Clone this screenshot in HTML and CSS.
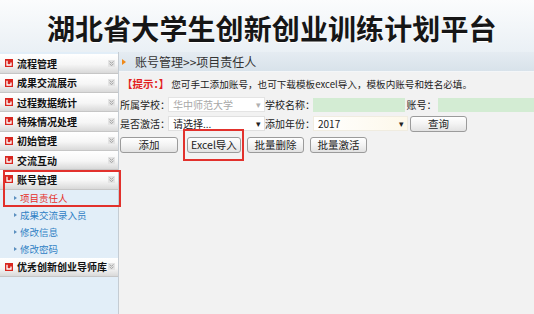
FILE: index.html
```html
<!DOCTYPE html>
<html lang="zh">
<head>
<meta charset="utf-8">
<title>湖北省大学生创新创业训练计划平台</title>
<link rel="stylesheet" href="styles.css">
</head>
<body>
<div class="page">
  <header class="top">
    <h1 class="title">湖北省大学生创新创业训练计划平台</h1>
  </header>
  <div class="main">
    <aside class="side">
      <div class="grp"><svg class="ico" viewBox="0 0 8 8"><rect width="8" height="8" fill="#d8261f"/><path d="M2 1.8V6H6V3.6" fill="none" stroke="#fff" stroke-width="1.3"/></svg><span class="gt">流程管理</span><svg class="chev" viewBox="0 0 7 7"><rect width="7" height="7" fill="#e4e4e4"/><path d="M1.5 1.5L3.5 3.2 5.5 1.5M1.5 3.8L3.5 5.5 5.5 3.8" fill="none" stroke="#9a9a9a" stroke-width="0.9"/></svg></div>
      <div class="grp"><svg class="ico" viewBox="0 0 8 8"><rect width="8" height="8" fill="#d8261f"/><path d="M2 1.8V6H6V3.6" fill="none" stroke="#fff" stroke-width="1.3"/></svg><span class="gt">成果交流展示</span><svg class="chev" viewBox="0 0 7 7"><rect width="7" height="7" fill="#e4e4e4"/><path d="M1.5 1.5L3.5 3.2 5.5 1.5M1.5 3.8L3.5 5.5 5.5 3.8" fill="none" stroke="#9a9a9a" stroke-width="0.9"/></svg></div>
      <div class="grp"><svg class="ico" viewBox="0 0 8 8"><rect width="8" height="8" fill="#d8261f"/><path d="M2 1.8V6H6V3.6" fill="none" stroke="#fff" stroke-width="1.3"/></svg><span class="gt">过程数据统计</span><svg class="chev" viewBox="0 0 7 7"><rect width="7" height="7" fill="#e4e4e4"/><path d="M1.5 1.5L3.5 3.2 5.5 1.5M1.5 3.8L3.5 5.5 5.5 3.8" fill="none" stroke="#9a9a9a" stroke-width="0.9"/></svg></div>
      <div class="grp"><svg class="ico" viewBox="0 0 8 8"><rect width="8" height="8" fill="#d8261f"/><path d="M2 1.8V6H6V3.6" fill="none" stroke="#fff" stroke-width="1.3"/></svg><span class="gt">特殊情况处理</span><svg class="chev" viewBox="0 0 7 7"><rect width="7" height="7" fill="#e4e4e4"/><path d="M1.5 1.5L3.5 3.2 5.5 1.5M1.5 3.8L3.5 5.5 5.5 3.8" fill="none" stroke="#9a9a9a" stroke-width="0.9"/></svg></div>
      <div class="grp"><svg class="ico" viewBox="0 0 8 8"><rect width="8" height="8" fill="#d8261f"/><path d="M2 1.8V6H6V3.6" fill="none" stroke="#fff" stroke-width="1.3"/></svg><span class="gt">初始管理</span><svg class="chev" viewBox="0 0 7 7"><rect width="7" height="7" fill="#e4e4e4"/><path d="M1.5 1.5L3.5 3.2 5.5 1.5M1.5 3.8L3.5 5.5 5.5 3.8" fill="none" stroke="#9a9a9a" stroke-width="0.9"/></svg></div>
      <div class="grp"><svg class="ico" viewBox="0 0 8 8"><rect width="8" height="8" fill="#d8261f"/><path d="M2 1.8V6H6V3.6" fill="none" stroke="#fff" stroke-width="1.3"/></svg><span class="gt">交流互动</span><svg class="chev" viewBox="0 0 7 7"><rect width="7" height="7" fill="#e4e4e4"/><path d="M1.5 1.5L3.5 3.2 5.5 1.5M1.5 3.8L3.5 5.5 5.5 3.8" fill="none" stroke="#9a9a9a" stroke-width="0.9"/></svg></div>
      <div class="mark">
        <div class="grp"><svg class="ico" viewBox="0 0 8 8"><rect width="8" height="8" fill="#d8261f"/><path d="M2 1.8V6H6V3.6" fill="none" stroke="#fff" stroke-width="1.3"/></svg><span class="gt">账号管理</span><svg class="chev" viewBox="0 0 7 7"><rect width="7" height="7" fill="#e4e4e4"/><path d="M1.5 1.5L3.5 3.2 5.5 1.5M1.5 3.8L3.5 5.5 5.5 3.8" fill="none" stroke="#9a9a9a" stroke-width="0.9"/></svg></div>
        <div class="sub active"><span class="dot"></span>项目责任人</div>
      </div>
      <div class="sub"><span class="dot"></span>成果交流录入员</div>
      <div class="sub"><span class="dot"></span>修改信息</div>
      <div class="sub"><span class="dot"></span>修改密码</div>
      <div class="grp"><svg class="ico" viewBox="0 0 8 8"><rect width="8" height="8" fill="#d8261f"/><path d="M2 1.8V6H6V3.6" fill="none" stroke="#fff" stroke-width="1.3"/></svg><span class="gt">优秀创新创业导师库</span><svg class="chev" viewBox="0 0 7 7"><rect width="7" height="7" fill="#e4e4e4"/><path d="M1.5 1.5L3.5 3.2 5.5 1.5M1.5 3.8L3.5 5.5 5.5 3.8" fill="none" stroke="#9a9a9a" stroke-width="0.9"/></svg></div>
    </aside>
    <section class="content">
      <div class="crumb"><span class="tri"></span>账号管理&gt;&gt;项目责任人</div>
      <div class="tip"><span class="tip-h">【提示：】</span>您可手工添加账号，也可下载模板excel导入，模板内账号和姓名必填。</div>
      <div class="row">
        <span class="lbl">所属学校：</span>
        <span class="sel sel-dis w97">华中师范大学<span class="caret">▾</span></span>
        <span class="lbl">学校名称：</span>
        <span class="inp w92"></span>
        <span class="lbl lbl-c">账号：</span>
        <span class="inp grow"></span>
      </div>
      <div class="row">
        <span class="lbl">是否激活：</span>
        <span class="sel w97">请选择...<span class="caret dark">▾</span></span>
        <span class="lbl">添加年份：</span>
        <span class="sel sel-y w95">2017<span class="caret dark">▾</span></span>
        <button class="btn btn-q">查询</button>
      </div>
      <div class="row row-btn">
        <button class="btn b58">添加</button>
        <button class="btn b54 hl">Excel导入</button>
        <button class="btn b57">批量删除</button>
        <button class="btn b57">批量激活</button>
      </div>
    </section>
  </div>
</div>
</body>
</html>
```
FILE: styles.css
```css
html, body { margin: 0; padding: 0; }
body {
  font-family: "Noto Sans CJK SC", "Liberation Sans", sans-serif;
  background: #f2f2f2;
  color: #222;
}
.page { width: 534px; height: 314px; overflow: hidden; display: flex; flex-direction: column; }
.top {
  height: 52px;
  flex: none;
  box-sizing: border-box;
  padding-top: 3px;
  background: linear-gradient(to bottom, #fbfcfd, #eaf0f5);
  display: flex;
  align-items: center;
}
.title {
  margin: 0 0 0 47px;
  font-size: 28px;
  line-height: 30px;
  font-weight: 700;
  color: #161616;
  letter-spacing: 0.1px;
  text-shadow: 0 1px 0 #fff;
}
.main { flex: 1; display: flex; }
.side {
  width: 119px;
  flex: none;
  background: #e2eef8;
  border-right: 1px solid #c5ccd3;
  padding-top: 2.3px;
  box-sizing: border-box;
}
.grp {
  height: 19.33px;
  box-sizing: border-box;
  border-bottom: 1px solid #c6c6c6;
  background: linear-gradient(to bottom, #ffffff 0%, #f6f6f6 55%, #d9d9d9 100%);
  display: flex;
  align-items: center;
  padding-left: 5px;
  font-size: 10px;
  font-weight: 700;
  color: #111;
}
.ico { width: 8px; height: 8px; flex: none; }
.gt { margin-left: 4px; flex: 1; white-space: nowrap; }
.chev { width: 7px; height: 7px; margin-right: 3px; flex: none; }
.sub {
  height: 17px;
  display: flex;
  align-items: center;
  padding-left: 14px;
  font-size: 9.5px;
  color: #2f80c4;
  background: #e2eef8;
  box-sizing: border-box;
}
.sub.active { color: #e5302a; }
.dot {
  width: 0; height: 0;
  border-left: 3px solid #5b8fbf;
  border-top: 2px solid transparent;
  border-bottom: 2px solid transparent;
  margin-right: 3px;
}
.mark { position: relative; }
.mark::after {
  content: "";
  position: absolute;
  left: 3px; right: -3px; top: 0; bottom: 0;
  border: 2px solid #e2312c;
  pointer-events: none;
}
.content { flex: 1; background: #f2f2f2; min-width: 0; }
.crumb {
  height: 20px;
  box-sizing: border-box;
  background: linear-gradient(to bottom, #e5ecf2, #d8e2ea);
  border-bottom: 1px solid #f4f6f8;
  display: flex;
  align-items: center;
  padding-left: 3px;
  font-size: 12px;
  color: #333;
}
.tri {
  width: 0; height: 0;
  border-left: 4px solid #ef8a1a;
  border-top: 3.5px solid transparent;
  border-bottom: 3.5px solid transparent;
  margin-right: 9px;
}
.tip {
  height: 23px;
  display: flex;
  align-items: center;
  padding-left: 3px;
  font-size: 9.6px;
  color: #222;
  white-space: nowrap;
}
.tip-h { color: #e21e1e; font-weight: 700; font-size: 10.5px; margin-right: 2px; }
.row {
  height: 19px;
  display: flex;
  align-items: center;
  padding-left: 1px;
  font-size: 10px;
  white-space: nowrap;
}
.lbl { width: 48px; flex: none; color: #222; }
.lbl-c { width: 33px; text-align: center; }
.sel {
  height: 15px;
  box-sizing: border-box;
  display: flex;
  align-items: center;
  padding-left: 4px;
  background: #fff;
  border: 1px solid #e0e0e0;
  font-size: 10px;
  color: #222;
  position: relative;
}
.sel-dis { color: #a8a8a8; border-color: #e4e4e4; }
.sel-y { background: linear-gradient(to right, #fff 0%, #fdf8ea 100%); border-color: #f0ece0; }
.caret { position: absolute; right: 3px; top: 0; font-size: 9px; line-height: 13px; color: #b0b0b0; }
.caret.dark { color: #222; }
.w97 { width: 97px; }
.w95 { width: 95px; }
.w92 { width: 92px; }
.inp { height: 14px; background: #d3ecd3; flex: none; }
.inp.grow { flex: 1; }
.btn {
  height: 16px;
  box-sizing: border-box;
  padding: 0;
  border: 1px solid #9b9b9b;
  border-radius: 3px;
  background: linear-gradient(to bottom, #ffffff 0%, #f3f3f3 50%, #e2e2e2 100%);
  font-family: "Noto Sans CJK SC", "Liberation Sans", sans-serif;
  font-size: 10.5px;
  line-height: 14px;
  color: #222;
  flex: none;
}
.btn-q { width: 57px; margin-left: 2px; }
.row-btn { height: 22px; margin-top: 1px; }
.b58 { width: 58px; }
.b54 { width: 54px; margin-left: 9px; }
.b57 { width: 57px; margin-left: 6px; }
.hl { position: relative; }
.hl::after {
  content: "";
  position: absolute;
  left: -5px; right: -4px; top: -9px; bottom: -9px;
  border: 2px solid #e2312c;
  pointer-events: none;
}
```
